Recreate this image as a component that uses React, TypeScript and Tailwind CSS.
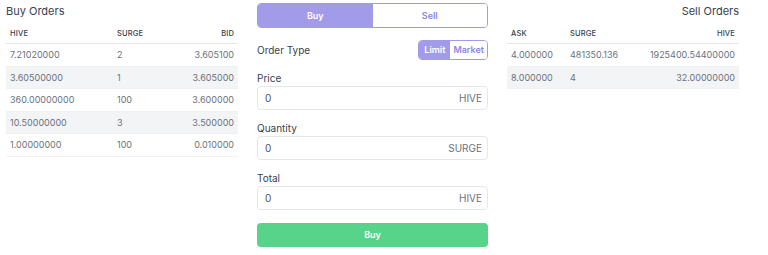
import React from "react";

const buy = [
  ["7.21020000", "2", "3.605100"],
  ["3.60500000", "1", "3.605000"],
  ["360.00000000", "100", "3.600000"],
  ["10.50000000", "3", "3.500000"],
  ["1.00000000", "100", "0.010000"],
];
const sell = [
  ["4.000000", "481350.136", "1925400.54400000"],
  ["8.000000", "4", "32.00000000"],
];

function Field({ label, unit }: { label: string; unit: string }) {
  return (
    <div className="flex flex-col">
      <div className="text-[10px] text-[#374151] h-[19px] leading-[22px] mt-[7px]">{label}</div>
      <div className="h-[24px] border border-[#e5e7eb] rounded-[4px] flex items-center justify-between pl-[7px] pr-[5px] text-[10px] text-[#4b5563]">
        <span>0</span>
        <span className="text-[#6b7280]">{unit}</span>
      </div>
    </div>
  );
}

export default function App() {
  return (
    <div className="w-[768px] h-[255px] bg-white flex px-[6px] gap-[19px] font-['Inter',sans-serif]">
      <div className="w-[232px] flex flex-col">
        <div className="text-[11px] text-[#374151] h-[24px] leading-[22px]">Buy Orders</div>
        <div className="grid grid-cols-[107px_1fr_auto] text-[7.5px] font-medium text-[#374151] h-[20px] items-center border-b border-[#e5e7eb] px-[4px] tracking-[0.02em]">
          <span>HIVE</span><span>SURGE</span><span className="text-right">BID</span>
        </div>
        {buy.map((r, i) => (
          <div key={i} className={`grid grid-cols-[107px_1fr_auto] text-[9px] text-[#6b7280] h-[22.5px] items-center px-[4px] border-b border-[#f0f0f3] ${i % 2 === 1 ? "bg-[#f3f4f6]" : ""}`}>
            <span>{r[0]}</span><span>{r[1]}</span><span className="text-right">{r[2]}</span>
          </div>
        ))}
      </div>
      <div className="w-[231px] flex flex-col pt-[3px]">
        <div className="flex h-[25px] rounded-[4px] border border-[#a29be9] overflow-hidden text-[9px] font-semibold">
          <div className="flex-1 bg-[#a29be9] text-white flex items-center justify-center">Buy</div>
          <div className="flex-1 bg-white text-[#8e86e0] flex items-center justify-center">Sell</div>
        </div>
        <div className="flex items-center justify-between mt-[11px] h-[21px]">
          <span className="text-[10px] text-[#374151] pt-[1px]">Order Type</span>
          <div className="flex h-[20px] rounded-[4px] border border-[#a29be9] overflow-hidden text-[9px] font-semibold">
            <div className="bg-[#a29be9] text-white flex items-center px-[5px]">Limit</div>
            <div className="bg-white text-[#8e86e0] flex items-center px-[3px]">Market</div>
          </div>
        </div>
        <Field label="Price" unit="HIVE" />
        <Field label="Quantity" unit="SURGE" />
        <Field label="Total" unit="HIVE" />
        <div className="mt-[13px] h-[24px] rounded-[4px] bg-[#57d48a] text-white text-[9px] font-semibold flex items-center justify-center">Buy</div>
      </div>
      <div className="w-[232px] flex flex-col">
        <div className="text-[11px] text-[#374151] h-[24px] leading-[22px] text-right">Sell Orders</div>
        <div className="grid grid-cols-[59px_1fr_auto] text-[7.5px] font-medium text-[#374151] h-[20px] items-center border-b border-[#e5e7eb] px-[4px] tracking-[0.02em]">
          <span>ASK</span><span>SURGE</span><span className="text-right">HIVE</span>
        </div>
        {sell.map((r, i) => (
          <div key={i} className={`grid grid-cols-[59px_1fr_auto] text-[9px] text-[#6b7280] h-[22.5px] items-center px-[4px] border-b border-[#f0f0f3] ${i % 2 === 1 ? "bg-[#f3f4f6]" : ""}`}>
            <span>{r[0]}</span><span>{r[1]}</span><span className="text-right">{r[2]}</span>
          </div>
        ))}
      </div>
    </div>
  );
}
